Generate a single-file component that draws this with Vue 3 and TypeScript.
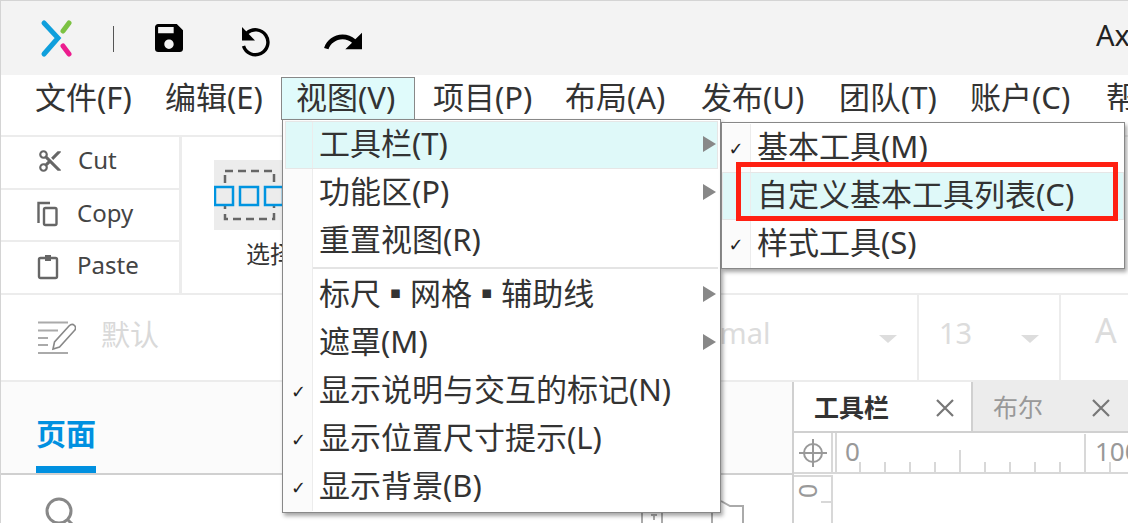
<template>
  <div class="app">
    <header class="topbar">
      <svg class="logo" width="34" height="40" viewBox="0 0 34 40" fill="none" stroke-linecap="round">
        <path d="M4 4 L18 19 L4 35" stroke="#0f9fdc" stroke-width="5" stroke-linejoin="miter" />
        <path d="M29 4 L23 12" stroke="#7cc242" stroke-width="5" />
        <path d="M23 27 L29 35" stroke="#ec1c8e" stroke-width="5" />
      </svg>
      <span class="topdiv"></span>
      <svg class="ticon save" width="28" height="28" viewBox="3 3 18 18">
        <path d="M17 3H5c-1.11 0-2 .9-2 2v14c0 1.1.89 2 2 2h14c1.1 0 2-.9 2-2V7l-4-4zm-5 16c-1.66 0-3-1.34-3-3s1.34-3 3-3 3 1.34 3 3-1.34 3-3 3zm3-10H5V5h10v4z" />
      </svg>
      <svg class="ticon undo" width="32" height="32" viewBox="240 24 32 32">
        <path d="M247 32 A12.5 12.5 0 1 1 243.5 45" fill="none" stroke="#000" stroke-width="3.4" />
        <path d="M242 26 V39.5 H255 Z" />
      </svg>
      <svg class="ticon redo" width="38" height="20" viewBox="1.5 7 20.5 9">
        <path d="M18.4 10.6C16.55 8.99 14.15 8 11.5 8c-4.65 0-8.58 3.03-9.96 7.22L3.9 16c1.05-3.19 4.05-5.5 7.6-5.5 1.95 0 3.73.72 5.12 1.88L13 16h9V7l-3.6 3.6z" />
      </svg>
      <span class="product">Ax</span>
    </header>

    <nav class="menubar">
      <span
        v-for="m in menus"
        :key="m.label"
        class="menubar-item"
        :class="{ open: m.label === '视图(V)' }"
        :style="{ width: m.width + 'px' }"
      >{{ m.label }}</span>
    </nav>

    <section class="ribbon">
      <div class="clipboard">
        <div class="clip-row">
          <svg width="26" height="26" viewBox="0 0 24 24" fill="#666">
            <path d="M9.64 7.64c.23-.5.36-1.05.36-1.64 0-2.21-1.79-4-4-4S2 3.79 2 6s1.79 4 4 4c.59 0 1.14-.13 1.64-.36L10 12l-2.36 2.36C7.14 14.13 6.59 14 6 14c-2.21 0-4 1.79-4 4s1.79 4 4 4 4-1.79 4-4c0-.59-.13-1.14-.36-1.64L12 14l7 7h3v-1L9.64 7.64zM6 8c-1.1 0-2-.89-2-2s.9-2 2-2 2 .89 2 2-.9 2-2 2zm0 12c-1.1 0-2-.89-2-2s.9-2 2-2 2 .89 2 2-.9 2-2 2zM19 3l-6 6 2 2 7-7V3h-3z" />
          </svg>
          <span class="cut">Cut</span>
        </div>
        <div class="clip-row">
          <svg width="26" height="28" viewBox="0 0 26 28" fill="none" stroke="#666" stroke-width="2.4">
            <path d="M1.5 23 V3 H13" />
            <rect x="7" y="8" width="12.5" height="17" rx="1.5" />
          </svg>
          <span>Copy</span>
        </div>
        <div class="clip-row">
          <svg width="26" height="28" viewBox="0 0 26 28" fill="none" stroke="#666" stroke-width="2.4">
            <rect x="2" y="5" width="18" height="20" rx="1.5" />
            <rect x="8" y="2" width="6" height="6" fill="#666" stroke="none" />
          </svg>
          <span>Paste</span>
        </div>
      </div>
      <div class="select-tool">
        <div class="select-btn">
          <svg width="70" height="70" viewBox="0 0 70 70" fill="none">
            <rect x="11" y="11" width="49" height="48" stroke="#666" stroke-width="2.5" stroke-dasharray="8 5" />
            <rect x="1" y="27" width="18" height="18" fill="#ececec" stroke="#0094e0" stroke-width="2.5" />
            <rect x="26" y="27" width="18" height="18" fill="#ececec" stroke="#0094e0" stroke-width="2.5" />
            <rect x="51" y="27" width="18" height="18" fill="#ececec" stroke="#0094e0" stroke-width="2.5" />
          </svg>
        </div>
        <span class="select-label">选择</span>
      </div>
    </section>

    <section class="stylebar">
      <svg class="style-icon" width="38" height="34" viewBox="0 0 38 34" fill="none" stroke="#aaa" stroke-width="2.2">
        <path d="M0 1.5 H30 M0 9.5 H20 M0 17 H10 M0 24 H10 M0 32 H30" />
        <path d="M15 28 L16.5 21 L31 5 C33 3 35 3 36.5 4.5 C38 6 38 8 36 10 L21.5 26 Z" stroke="#888" stroke-width="1.6" />
      </svg>
      <span class="style-name">默认</span>
      <div class="style-fields">
        <div class="field font-field"><span>Normal</span><i class="caret"></i></div>
        <div class="field size-field"><span>13</span><i class="caret"></i></div>
        <div class="field a-field"><span>A</span></div>
      </div>
    </section>

    <section class="workspace">
      <aside class="left-pane">
        <div class="pane-tabs"><span class="page-tab">页面</span></div>
        <div class="pane-body">
          <svg class="search" width="34" height="34" viewBox="0 0 34 34" fill="none" stroke="#888" stroke-width="3">
            <circle cx="14" cy="14" r="12" />
            <path d="M23 23 L32 32" />
          </svg>
          <svg class="tree-icons" width="104" height="26" viewBox="0 0 104 26" fill="none" stroke="#aaa" stroke-width="2">
            <path d="M2 26 V14 M22 26 V14 M72 26 V14 M11 17 H17 M14 17 V22 M81 3 L90 8 H103 V26" />
          </svg>
        </div>
      </aside>
      <div class="right-pane">
        <div class="tabs">
          <div v-for="(tab, i) in tabs" :key="tab" class="tab" :class="{ active: i === 0 }">
            <span>{{ tab }}</span>
            <svg width="18" height="18" viewBox="0 0 18 18" stroke="#777" stroke-width="2.2">
              <path d="M1 1 L17 17 M17 1 L1 17" />
            </svg>
          </div>
        </div>
        <div class="ruler-row">
          <div class="corner">
            <svg width="28" height="28" viewBox="0 0 28 28" fill="none" stroke="#999" stroke-width="2">
              <circle cx="14" cy="14" r="9" />
              <path d="M14 0 V28 M0 14 H28" />
            </svg>
          </div>
          <div class="ruler">
            <span class="ruler-0">0</span>
            <span class="ruler-100">100</span>
            <i
              v-for="t in ticks"
              :key="t.x"
              class="tick"
              :style="{ left: t.x + 'px', height: t.h + 'px' }"
            ></i>
          </div>
        </div>
        <div class="canvas-row">
          <div class="vruler"><span>0</span><i class="vtick"></i></div>
        </div>
      </div>
    </section>

    <div class="dropdown main-menu">
      <template v-for="(item, i) in viewMenu" :key="i">
        <div v-if="item.sep" class="sep"><span class="gutter"></span><i></i></div>
        <div v-else class="item" :class="{ hot: item.hot }">
          <span class="gutter">{{ item.check ? '✓' : '' }}</span>
          <span class="label">{{ item.label }}</span>
          <i v-if="item.sub" class="arrow"></i>
        </div>
      </template>
    </div>

    <div class="dropdown sub-menu">
      <div v-for="item in toolbarMenu" :key="item.label" class="item" :class="{ hot: item.hot }">
        <span class="gutter">{{ item.check ? '✓' : '' }}</span>
        <span class="label">{{ item.label }}</span>
      </div>
    </div>

    <div class="callout"></div>
  </div>
</template>

<script setup lang="ts">
interface MenuItem {
  label?: string
  check?: boolean
  sub?: boolean
  hot?: boolean
  sep?: boolean
}

const menus = [
  { label: '文件(F)', width: 129 },
  { label: '编辑(E)', width: 130 },
  { label: '视图(V)', width: 134 },
  { label: '项目(P)', width: 131 },
  { label: '布局(A)', width: 135 },
  { label: '发布(U)', width: 137 },
  { label: '团队(T)', width: 130 },
  { label: '账户(C)', width: 135 },
  { label: '帮助(H)', width: 130 },
]
const tabs = ['工具栏', '布尔']

const viewMenu: MenuItem[] = [
  { label: '工具栏(T)', sub: true, hot: true },
  { label: '功能区(P)', sub: true },
  { label: '重置视图(R)' },
  { sep: true },
  { label: '标尺 ▪ 网格 ▪ 辅助线', sub: true },
  { label: '遮罩(M)', sub: true },
  { label: '显示说明与交互的标记(N)', check: true },
  { label: '显示位置尺寸提示(L)', check: true },
  { label: '显示背景(B)', check: true },
]

const toolbarMenu: MenuItem[] = [
  { label: '基本工具(M)', check: true },
  { label: '自定义基本工具列表(C)', hot: true },
  { label: '样式工具(S)', check: true },
]

// a tick every 25px, taller at 50, full height at 100
const ticks = Array.from({ length: 12 }, (_, i) => ({
  x: 22 + i * 25,
  h: i === 9 ? 38 : i === 4 ? 22 : 10,
}))
</script>

<style>
body {
  margin: 0;
}
</style>

<style scoped>
.app {
  position: relative;
  width: 1128px;
  height: 523px;
  overflow: hidden;
  background: #fff;
  border-top: 1px solid #d4d4d4;
  border-left: 1px solid #d4d4d4;
  box-sizing: border-box;
  display: flex;
  flex-direction: column;
  font-family: "Noto Sans", "Noto Sans CJK SC", sans-serif;
  color: #333;
}

.topbar {
  height: 74px;
  flex: none;
  background: #f3f3f3;
  display: flex;
  align-items: center;
  position: relative;
}
.logo {
  margin-left: 39px;
  margin-top: 1px;
}
.topdiv {
  width: 1px;
  height: 26px;
  background: #555;
  margin-left: 39px;
  margin-top: 1px;
}
.ticon {
  flex: none;
}
.save {
  margin-left: 41px;
}
.undo {
  margin-left: 57px;
  margin-top: 6px;
}
.redo {
  margin-left: 52px;
  margin-top: 5px;
}
.product {
  position: absolute;
  left: 1095px;
  top: 14px;
  font-size: 29px;
  color: #222;
}

.menubar {
  height: 60px;
  flex: none;
  display: flex;
  padding-left: 18px;
  font-size: 31px;
  white-space: nowrap;
  line-height: 38px;
  box-sizing: border-box;
}
.menubar-item {
  padding: 0 0 0 15px;
  height: 43px;
  margin-top: 2px;
  flex: none;
  box-sizing: border-box;
  border: 1px solid transparent;
  border-bottom: 0;
  margin-right: 1px;
}
.menubar-item.open {
  background: #e0fbfb;
  border-color: #888;
  margin-left: 1px;
  margin-right: 2px;
  padding-left: 14px;
}

.ribbon {
  height: 158px;
  flex: none;
  border-top: 2px solid #ececec;
  box-sizing: border-box;
  display: flex;
}
.clipboard {
  width: 178px;
  flex: none;
  border-right: 3px solid #ececec;
  display: flex;
  flex-direction: column;
}
.clip-row {
  flex: 1;
  display: flex;
  align-items: center;
  gap: 14px;
  padding-left: 36px;
  font-size: 24px;
  color: #444;
  border-bottom: 2px solid #ececec;
}
.clip-row:last-child {
  border-bottom: 0;
}
.clip-row svg {
  margin-bottom: 2px;
}
.clip-row span {
  margin-bottom: 6px;
}
.cut {
  margin-left: 1px;
}
.select-tool {
  margin-left: 32px;
  display: flex;
  flex-direction: column;
  align-items: flex-start;
  width: 70px;
  padding-top: 23px;
}
.select-btn {
  width: 70px;
  height: 70px;
  background: #ececec;
}
.select-label {
  font-size: 24px;
  margin-top: 5px;
  margin-left: 32px;
  white-space: nowrap;
}

.stylebar {
  height: 87px;
  flex: none;
  border-top: 2px solid #ececec;
  box-sizing: border-box;
  display: flex;
  align-items: center;
  padding-left: 37px;
}
.style-name {
  font-size: 29px;
  color: #d9d9d9;
  margin-left: 25px;
  padding-bottom: 10px;
}
.style-fields {
  position: absolute;
  left: 640px;
  height: 85px;
  display: flex;
  color: #dcdcdc;
}
.field {
  display: flex;
  align-items: center;
  box-sizing: border-box;
  border-right: 2px solid #ececec;
  font-size: 29px;
  height: 85px;
}
.field span {
  padding-bottom: 10px;
}
.font-field {
  width: 278px;
  padding-left: 27px;
}
.size-field {
  width: 142px;
  padding-left: 20px;
}
.a-field {
  padding-left: 34px;
  border-right: 0;
  font-size: 34px;
}
.a-field span {
  padding-bottom: 16px;
}
.caret {
  width: 0;
  height: 0;
  border-left: 9px solid transparent;
  border-right: 9px solid transparent;
  border-top: 8px solid #ddd;
  margin-left: auto;
  margin-right: 20px;
  margin-top: 2px;
}

.workspace {
  flex: 1;
  min-height: 0;
  display: flex;
  border-top: 2px solid #ececec;
}
.left-pane {
  width: 791px;
  flex: none;
}
.pane-tabs {
  height: 93px;
  box-sizing: border-box;
  background: #fbfbfb;
  border-bottom: 2px solid #d0d0d0;
  padding-left: 35px;
  display: flex;
  align-items: flex-end;
}
.page-tab {
  width: 60px;
  height: 51px;
  box-sizing: border-box;
  border-bottom: 7px solid #0090e0;
  color: #0090e0;
  font-size: 30px;
  line-height: 20px;
  font-weight: 700;
  font-family: "Noto Sans CJK SC", sans-serif;
  white-space: nowrap;
}
.pane-body {
  display: flex;
  padding-left: 44px;
  padding-top: 22px;
}
.tree-icons {
  margin-left: 561px;
  margin-top: 1px;
}
.right-pane {
  flex: 1;
  min-width: 0;
  border-left: 2px solid #d0d0d0;
  display: flex;
  flex-direction: column;
}
.tabs {
  height: 51px;
  flex: none;
  display: flex;
  border-bottom: 2px solid #d0d0d0;
  box-sizing: border-box;
}
.tab {
  width: 155px;
  flex: none;
  box-sizing: border-box;
  display: flex;
  align-items: center;
  padding: 0 18px 0 20px;
  font-size: 25px;
  color: #999;
  background: #ececec;
  white-space: nowrap;
}
.tab span {
  flex: 1;
  padding-bottom: 2px;
}
.tab svg {
  margin-top: 3px;
}
.tab.active {
  width: 179px;
  padding-right: 17px;
  background: #fff;
  color: #333;
  border-right: 2px solid #d0d0d0;
}
.tab.active span {
  font-weight: 700;
  font-family: "Noto Sans CJK SC", sans-serif;
}
.ruler-row {
  height: 41px;
  flex: none;
  display: flex;
  border-bottom: 2px solid #d8d8d8;
  box-sizing: border-box;
}
.corner {
  width: 39px;
  flex: none;
  border-right: 2px solid #d8d8d8;
  display: flex;
  align-items: center;
  justify-content: center;
  box-sizing: border-box;
}
.ruler {
  flex: 1;
  position: relative;
  margin-left: 2px;
  border-left: 2px solid #d8d8d8;
  overflow: hidden;
  font-size: 26px;
  line-height: 36px;
  color: #999;
}
.ruler-0 {
  position: absolute;
  left: 8px;
  top: 0;
}
.ruler-100 {
  position: absolute;
  left: 258px;
  top: 0;
}
.tick {
  position: absolute;
  bottom: 0;
  width: 2px;
  background: #d8d8d8;
}
.canvas-row {
  flex: 1;
  display: flex;
}
.vruler {
  width: 39px;
  box-sizing: border-box;
  border-right: 2px solid #d8d8d8;
  border-top: 2px solid #d8d8d8;
  margin-top: 1px;
  position: relative;
  color: #999;
  font-size: 25px;
  line-height: 30px;
}
.vruler span {
  position: absolute;
  left: 8px;
  top: -1px;
  transform: rotate(90deg);
}
.vtick {
  position: absolute;
  right: 0;
  top: 24px;
  width: 10px;
  height: 2px;
  background: #d8d8d8;
}

.dropdown {
  position: absolute;
  background: #fff;
  border: 1px solid #888;
  box-shadow: 2px 3px 4px rgba(0, 0, 0, 0.35);
  box-sizing: border-box;
  font-size: 31px;
  color: #333;
  white-space: nowrap;
}
.main-menu {
  left: 281px;
  top: 118px;
  width: 439px;
  height: 394px;
  padding: 1px 2px;
  background: linear-gradient(to right, #fbfbfb 29px, #fff 29px);
}
.sub-menu {
  left: 720px;
  top: 121px;
  width: 404px;
  height: 147px;
  padding: 1px 0 0;
}
.item {
  height: 48px;
  display: flex;
  align-items: center;
  box-sizing: border-box;
  position: relative;
}
.item.hot {
  background: #dff9f9;
  outline: 1px solid #e6e6e6;
  outline-offset: -1px;
}
.gutter {
  width: 27px;
  height: 100%;
  flex: none;
  border-right: 1px solid #ececec;
  background: #fbfbfb;
  display: flex;
  align-items: center;
  justify-content: center;
  font-size: 18px;
  color: #222;
  font-family: "DejaVu Sans", sans-serif;
}
.item.hot .gutter {
  background: #dff9f9;
}
.label {
  padding-left: 6px;
  padding-bottom: 8px;
  word-spacing: -9px;
}
.arrow {
  position: absolute;
  left: 418px;
  top: 15px;
  border-left: 13px solid #888;
  border-top: 8px solid transparent;
  border-bottom: 8px solid transparent;
}
.sep {
  height: 6px;
  display: flex;
  align-items: center;
}
.sep i {
  flex: 1;
  height: 2px;
  background: #e4e4e4;
}
.sub-menu .gutter {
  width: 28px;
}

.callout {
  position: absolute;
  left: 735px;
  top: 161px;
  width: 382px;
  height: 59px;
  box-sizing: border-box;
  border: 5px solid #ff2012;
}
</style>
